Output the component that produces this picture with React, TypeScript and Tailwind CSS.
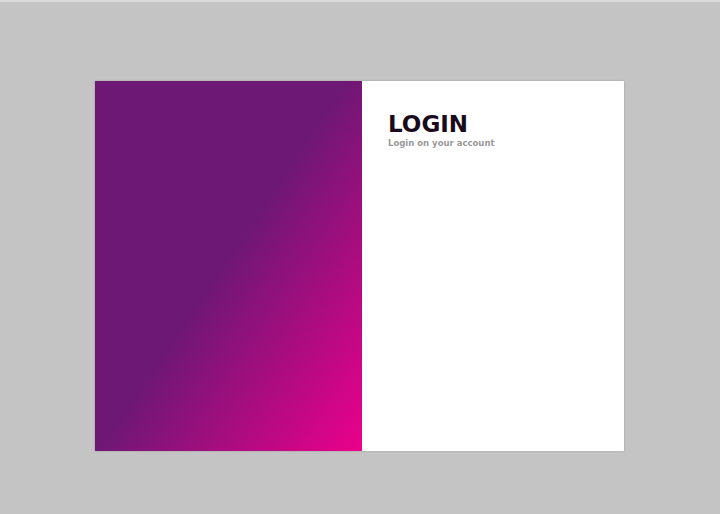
export default function App() {
  return (
    <div className="w-[720px] h-[514px] bg-[#c4c4c4] border-t-2 border-[#dadada] flex items-start justify-start">
      <div className="ml-[95px] mt-[79px] flex w-[529px] h-[370px] shadow-[0_0_2px_rgba(0,0,0,0.2)]">
        <div className="w-[267px] h-full bg-[linear-gradient(124deg,#6c1874_0%,#6c1874_48%,#ec008c_100%)]" />
        <div className="flex-1 bg-white pl-[26px] pt-[32px]">
          <h1
            className="text-[23px] font-bold leading-none text-[#1a0b1c]"
            style={{ fontFamily: '"DejaVu Sans", sans-serif' }}
          >
            LOGIN
          </h1>
          <p
            className="mt-[1px] text-[8.5px] font-semibold text-[#9a9a9a]"
            style={{ fontFamily: '"DejaVu Sans", sans-serif' }}
          >
            Login on your account
          </p>
        </div>
      </div>
    </div>
  );
}
